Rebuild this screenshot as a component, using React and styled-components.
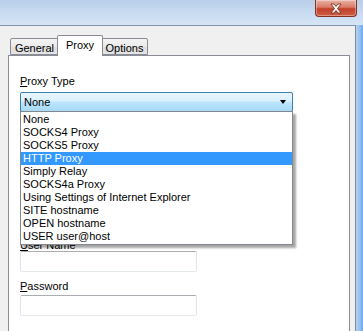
import React from "react";
import styled, { createGlobalStyle } from "styled-components";

const GlobalStyle = createGlobalStyle`
  html, body {
    margin: 0;
    padding: 0;
    width: 363px;
    height: 331px;
    overflow: hidden;
    background: #f0f0f0;
  }
  body {
    font-family: "Liberation Sans", Arial, sans-serif;
    font-size: 11px;
    color: #000;
  }
`;

const proxyTypes = [
  "None",
  "SOCKS4 Proxy",
  "SOCKS5 Proxy",
  "HTTP Proxy",
  "Simply Relay",
  "SOCKS4a Proxy",
  "Using Settings of Internet Explorer",
  "SITE hostname",
  "OPEN hostname",
  "USER user@host",
];

const Window = styled.div`
  width: 363px;
  height: 331px;
  display: flex;
  flex-direction: column;
  overflow: hidden;
  background: linear-gradient(180deg, #c3d8f1 0%, #9cc4ef 60%, #63abf2 100%);
`;

const TitleBar = styled.div`
  height: 25px;
  flex: none;
  display: flex;
  justify-content: flex-end;
  align-items: flex-start;
  padding-right: 6px;
  background: linear-gradient(180deg, #b8cfeb 0%, #c9dcf1 55%, #d6e5f5 100%);
`;

const CloseButton = styled.div`
  width: 42px;
  height: 17px;
  display: flex;
  align-items: center;
  justify-content: center;
  box-sizing: border-box;
  border: 1px solid #833123;
  border-top: none;
  border-radius: 0 0 4px 4px;
  background: linear-gradient(180deg, #e9b2a5 0%, #d97a66 45%, #c2412a 55%, #cf5d45 100%);
  box-shadow: inset 0 0 0 1px rgba(255, 255, 255, 0.35);
`;

const Body = styled.div`
  flex: 1;
  display: flex;
  min-height: 0;
`;

const Client = styled.div`
  flex: 1;
  display: flex;
  flex-direction: column;
  background: #f0f0f0;
  border-top: 1px solid #8194ab;
  border-right: 1px solid #7d8a99;
`;

const Frame = styled.div`
  width: 7px;
  flex: none;
  background: linear-gradient(90deg, #b7d3f3 0%, #93bdf0 60%, #6ba8ea 100%);
`;

const TabStrip = styled.div`
  display: flex;
  align-items: flex-end;
  height: 29px;
  padding-left: 10px;
  box-sizing: border-box;
`;

const Tab = styled.div`
  position: relative;
  box-sizing: border-box;
  width: ${(p) => p.$width}px;
  height: ${(p) => (p.$active ? "21px" : "17px")};
  margin: ${(p) => (p.$active ? "0 -2px -1px -2px" : "0")};
  z-index: ${(p) => (p.$active ? 2 : 1)};
  padding-top: ${(p) => (p.$active ? "2px" : "2px")};
  text-align: center;
  border: 1px solid #898c95;
  border-bottom: ${(p) => (p.$active ? "none" : "1px solid #898c95")};
  border-radius: 2px 2px 0 0;
  background: ${(p) =>
    p.$active
      ? "#ffffff"
      : "linear-gradient(180deg, #f3f3f3 0%, #ebebeb 50%, #dedede 51%, #e5e5e5 100%)"};
  font-size: 11px;
  line-height: 14px;
  color: #000;
`;

const Panel = styled.div`
  flex: 1;
  margin: 0 5px 0 8px;
  background: #fff;
  border: 1px solid #898c95;
  border-bottom: none;
  padding: 18px 11px 0 11px;
  display: flex;
  flex-direction: column;
  align-items: flex-start;
`;

const Label = styled.div`
  height: 15px;
  line-height: 15px;
  font-size: 11px;
  margin-top: ${(p) => p.$top || 0}px;
  margin-bottom: ${(p) => p.$bottom || 0}px;
`;

const SelectWrap = styled.div`
  position: relative;
  width: 273px;
`;

const Select = styled.div`
  height: 20px;
  box-sizing: border-box;
  border: 1px solid #3c7fb1;
  border-radius: 2px;
  background: linear-gradient(180deg, #eaf6fd 0%, #d9f0fc 45%, #bee6fd 50%, #a7d9f5 100%);
  display: flex;
  align-items: center;
  justify-content: space-between;
  padding: 0 3px 0 3px;
  font-size: 11px;
`;

const Arrow = styled.span`
  width: 0;
  height: 0;
  border-left: 3.5px solid transparent;
  border-right: 3.5px solid transparent;
  border-top: 4px solid #000;
  margin-right: 3px;
`;

const List = styled.div`
  position: absolute;
  top: 19px;
  left: 0;
  width: 273px;
  box-sizing: border-box;
  z-index: 5;
  background: #fff;
  border: 1px solid #828790;
  padding: 1px 0;
  box-shadow: 3px 3px 2px rgba(0, 0, 0, 0.35);
`;

const Item = styled.div`
  height: 13px;
  line-height: 13px;
  padding-left: 2px;
  font-size: 11px;
  white-space: nowrap;
  background: ${(p) => (p.$selected ? "#3399ff" : "transparent")};
  color: ${(p) => (p.$selected ? "#fff" : "#000")};
`;

const HiddenFields = styled.div`
  height: 126px;
`;

const TextBox = styled.div`
  width: 177px;
  height: 21px;
  box-sizing: border-box;
  border: 1px solid #e2e3ea;
  border-top-color: #abadb3;
  border-bottom-color: #e3e9ef;
  border-radius: 2px;
  background: #fff;
`;

function CloseIcon() {
  return (
    <svg width="14" height="11" viewBox="0 0 14 11">
      <path
        d="M2 1 L5 1 L7 3.5 L9 1 L12 1 L8.5 5.5 L12 10 L9 10 L7 7.5 L5 10 L2 10 L5.5 5.5 Z"
        fill="#fff"
        stroke="#6b2a20"
        strokeWidth="0.8"
        strokeLinejoin="round"
      />
    </svg>
  );
}

export default function App() {
  return (
    <>
      <GlobalStyle />
      <Window>
        <TitleBar>
          <CloseButton>
            <CloseIcon />
          </CloseButton>
        </TitleBar>
        <Body>
          <Client>
            <TabStrip>
              <Tab $width={49}>General</Tab>
              <Tab $width={46} $active>
                Proxy
              </Tab>
              <Tab $width={47}>Options</Tab>
            </TabStrip>
            <Panel>
              <Label $bottom={3}>
                <u>P</u>roxy Type
              </Label>
              <SelectWrap>
                <Select>
                  <span>None</span>
                  <Arrow />
                </Select>
                <List>
                  {proxyTypes.map((t) => (
                    <Item key={t} $selected={t === "HTTP Proxy"}>
                      {t}
                    </Item>
                  ))}
                </List>
              </SelectWrap>
              <HiddenFields />
              <Label $bottom={-2}>
                <u>U</u>ser Name
              </Label>
              <TextBox />
              <Label $top={7} $bottom={1}>
                <u>P</u>assword
              </Label>
              <TextBox />
            </Panel>
          </Client>
          <Frame />
        </Body>
      </Window>
    </>
  );
}
